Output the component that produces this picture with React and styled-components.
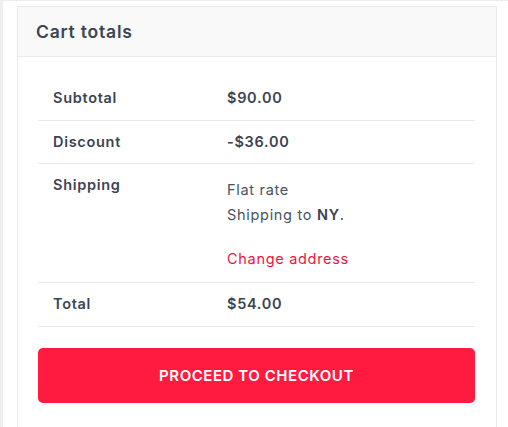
import React from "react";
import styled, { createGlobalStyle } from "styled-components";

const Global = createGlobalStyle`
  html, body { margin: 0; padding: 0; background: #ffffff; }
  body { font-family: "Inter", "Open Sans", sans-serif; color: #3d4451; }
  * { box-sizing: border-box; }
`;

const Page = styled.div`
  min-height: 427px;
  border-left: 3px solid #eeeeee;
  border-top: 1px solid #ececec;
  padding: 5px 11px 0 14px;
`;

const Card = styled.section`
  border: 1px solid #ebebeb;
  border-bottom: none;
  min-height: 421px;
  background: #fff;
`;

const Header = styled.header`
  height: 50px;
  background: #f9f9f9;
  border-bottom: 1px solid #ebebeb;
  display: flex;
  align-items: center;
  padding-left: 18px;
`;

const Title = styled.h2`
  margin: 0;
  font-size: 17.5px;
  font-weight: 600;
  color: #3d4451;
  letter-spacing: 0.8px;
`;

const Body = styled.div`
  padding: 20px 21px 0 20px;
`;

const Row = styled.div`
  display: grid;
  grid-template-columns: 189px 1fr;
  padding: 11px 0;
  border-bottom: 1px solid #e9e9e9;
  font-size: 14.5px;
  line-height: 20.5px;
  letter-spacing: 0.7px;
`;

const Label = styled.div`
  padding-left: 15px;
  font-weight: 600;
  color: #3d4451;
`;

const Value = styled.div`
  font-weight: ${(p) => (p.$strong ? 600 : 400)};
  color: #3d4451;
`;

const ShipList = styled.div`
  margin-top: 2px;
  line-height: 25px;
  color: #4a5260;
`;

const Bold = styled.strong`
  font-weight: 600;
  color: #3d4451;
`;

const ChangeLink = styled.a`
  display: block;
  margin-top: 19px;
  color: #e8173f;
  text-decoration: none;
  line-height: 25px;
`;

const Checkout = styled.button`
  display: flex;
  align-items: center;
  justify-content: center;
  width: 100%;
  height: 55px;
  margin-top: 21px;
  border: none;
  border-radius: 5px;
  background: #ff1a3f;
  color: #fff;
  font-family: inherit;
  font-size: 15px;
  font-weight: 600;
  letter-spacing: 0.55px;
  cursor: pointer;
`;

export default function App() {
  return (
    <>
      <Global />
      <Page>
        <Card>
          <Header>
            <Title>Cart totals</Title>
          </Header>
          <Body>
            <Row>
              <Label>Subtotal</Label>
              <Value $strong>$90.00</Value>
            </Row>
            <Row>
              <Label>Discount</Label>
              <Value $strong>-$36.00</Value>
            </Row>
            <Row>
              <Label>Shipping</Label>
              <Value>
                <ShipList>
                  <div>Flat rate</div>
                  <div>
                    Shipping to <Bold>NY</Bold>.
                  </div>
                  <ChangeLink href="#">Change address</ChangeLink>
                </ShipList>
              </Value>
            </Row>
            <Row>
              <Label>Total</Label>
              <Value $strong>$54.00</Value>
            </Row>
            <Checkout>PROCEED TO CHECKOUT</Checkout>
          </Body>
        </Card>
      </Page>
    </>
  );
}
